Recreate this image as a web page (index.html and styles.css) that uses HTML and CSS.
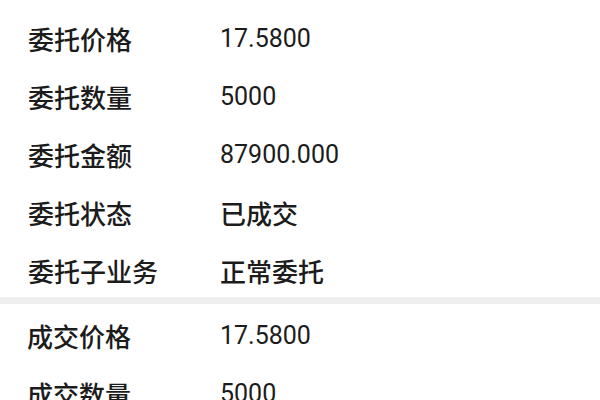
FILE: index.html
```html
<!DOCTYPE html>
<html lang="zh">
<head>
<meta charset="utf-8">
<link rel="stylesheet" href="styles.css">
</head>
<body>
<div class="page">
  <div class="section first">
    <div class="row"><span class="label">委托价格</span><span class="value">17.5800</span></div>
    <div class="row"><span class="label">委托数量</span><span class="value">5000</span></div>
    <div class="row"><span class="label">委托金额</span><span class="value">87900.000</span></div>
    <div class="row"><span class="label">委托状态</span><span class="value cjk">已成交</span></div>
    <div class="row"><span class="label">委托子业务</span><span class="value cjk">正常委托</span></div>
  </div>
  <div class="divider"></div>
  <div class="section second">
    <div class="row"><span class="label">成交价格</span><span class="value">17.5800</span></div>
    <div class="row"><span class="label">成交数量</span><span class="value">5000</span></div>
  </div>
</div>
</body>
</html>
```
FILE: styles.css
```css
html, body {
  margin: 0;
  padding: 0;
  background: #ffffff;
}
body {
  font-family: Roboto, "Noto Sans CJK SC", sans-serif;
  color: #1c1c1c;
  font-size: 25px;
  overflow: hidden;
  height: 400px;
}
.page {
  display: flex;
  flex-direction: column;
}
.section.first {
  padding: 9px 0 0 28px;
}
.section.second {
  padding: 2px 0 0 27px;
}
.row {
  display: flex;
  align-items: center;
  height: 58px;
}
.label {
  width: 192px;
  flex: none;
  font-size: 26px;
  font-weight: 500;
}
.section.second .label {
  width: 193px;
}
.value {
  flex: 1;
}
.value.cjk {
  font-size: 26px;
  font-weight: 500;
}
.divider {
  height: 7px;
  background: #efefef;
  margin-top: -2px;
}
```
